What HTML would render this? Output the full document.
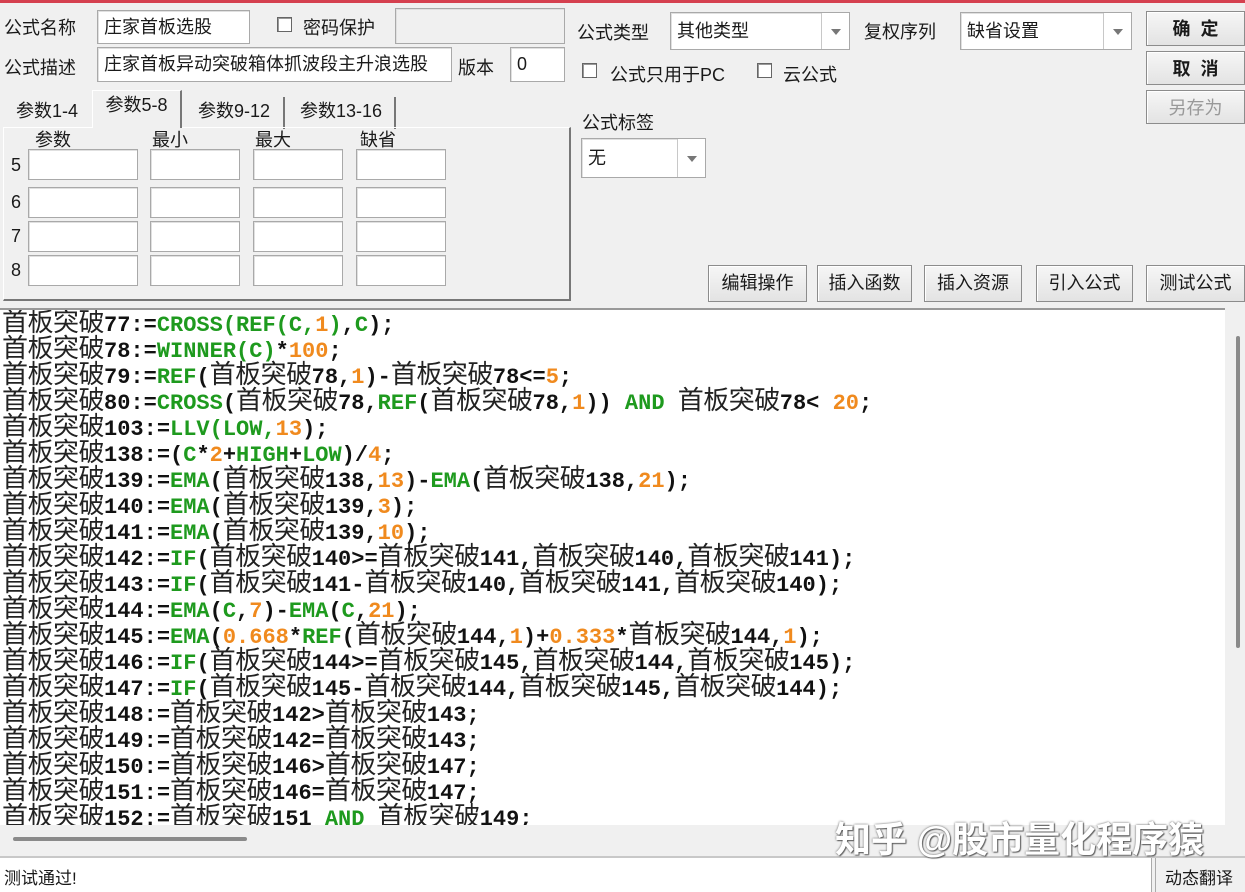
<!DOCTYPE html>
<html><head><meta charset="utf-8">
<style>
*{margin:0;padding:0;box-sizing:border-box}
body{width:1245px;height:892px;background:#f0f0f0;position:relative;overflow:hidden;font-family:"Liberation Sans","Noto Sans CJK SC",sans-serif;font-size:18px;color:#1a1a1a}
.a{position:absolute;white-space:nowrap}
.in{position:absolute;background:#fff;border:1px solid #a9a9a9;box-shadow:inset 1px 1px 0 #e0e0e0;padding-left:6px;line-height:32px;font-size:18px;white-space:nowrap;overflow:hidden}
.cb{position:absolute;width:15px;height:15px;background:#fff;border:1px solid #666;box-shadow:inset 1px 1px 0 #999}
.btn{position:absolute;background:linear-gradient(#f6f6f6,#e3e3e3);border:1px solid #8c8c8c;box-shadow:inset 1px 1px 0 #fff;text-align:center;font-size:18px;line-height:34px}
.arr{position:absolute;top:0;right:0;width:28px;height:100%;border-left:1px solid #c8c8c8;background:#fff}
.arr:after{content:"";position:absolute;left:9px;top:50%;margin-top:-2px;border-left:5px solid transparent;border-right:5px solid transparent;border-top:6px solid #777}
.tab{position:absolute;top:96px;height:32px;font-size:18px;line-height:28px;text-align:center;border-right:2px solid #777}
#code{position:absolute;left:0;top:308px;width:1225px;height:517px;background:#fff;overflow:hidden;border-top:2px solid #999}
pre{position:absolute;left:2px;top:3px;font-family:"Liberation Mono",monospace;font-weight:bold;font-size:22px;line-height:26px;color:#111}
.c{font-family:"Noto Sans CJK SC",sans-serif;font-weight:normal;font-size:26px;letter-spacing:-0.5px;color:#222;line-height:0}
.g{color:#1e9a1e}.o{color:#f08a1e}
</style></head><body>
<div class="a" style="left:0;top:0;width:1245px;height:3px;background:#d5404f"></div>

<div class="a" style="left:4px;top:14px">公式名称</div>
<div class="in" style="left:97px;top:10px;width:153px;height:34px">庄家首板选股</div>
<div class="cb" style="left:277px;top:17px"></div>
<div class="a" style="left:303px;top:14px">密码保护</div>
<div class="in" style="left:395px;top:8px;width:170px;height:36px;background:#f0f0f0"></div>

<div class="a" style="left:4px;top:54px">公式描述</div>
<div class="in" style="left:97px;top:47px;width:355px;height:35px">庄家首板异动突破箱体抓波段主升浪选股</div>
<div class="a" style="left:458px;top:54px">版本</div>
<div class="in" style="left:510px;top:47px;width:55px;height:35px">0</div>

<div class="tab" style="left:5px;width:84px;border-right:none;top:97px">参数1-4</div>
<div class="tab" style="left:92px;width:90px;top:90px;height:38px;background:#f0f0f0;border-left:1px solid #fff;border-top:1px solid #fff;z-index:2">参数5-8</div>
<div class="tab" style="left:185px;width:100px;top:97px">参数9-12</div>
<div class="tab" style="left:288px;width:108px;top:97px">参数13-16</div>
<div class="a" style="left:3px;top:127px;width:568px;height:174px;border:1px solid #fff;border-right:2px solid #777;border-bottom:2px solid #777"></div>
<div class="a" style="left:35px;top:126px">参数</div>
<div class="a" style="left:152px;top:126px">最小</div>
<div class="a" style="left:255px;top:126px">最大</div>
<div class="a" style="left:360px;top:126px">缺省</div>

<div class="a" style="left:11px;top:155px">5</div>
<div class="a" style="left:11px;top:192px">6</div>
<div class="a" style="left:11px;top:226px">7</div>
<div class="a" style="left:11px;top:260px">8</div>
<div class="in" style="left:28px;top:149px;width:110px;height:31px"></div><div class="in" style="left:150px;top:149px;width:90px;height:31px"></div><div class="in" style="left:253px;top:149px;width:90px;height:31px"></div><div class="in" style="left:356px;top:149px;width:90px;height:31px"></div>
<div class="in" style="left:28px;top:187px;width:110px;height:31px"></div><div class="in" style="left:150px;top:187px;width:90px;height:31px"></div><div class="in" style="left:253px;top:187px;width:90px;height:31px"></div><div class="in" style="left:356px;top:187px;width:90px;height:31px"></div>
<div class="in" style="left:28px;top:221px;width:110px;height:31px"></div><div class="in" style="left:150px;top:221px;width:90px;height:31px"></div><div class="in" style="left:253px;top:221px;width:90px;height:31px"></div><div class="in" style="left:356px;top:221px;width:90px;height:31px"></div>
<div class="in" style="left:28px;top:255px;width:110px;height:31px"></div><div class="in" style="left:150px;top:255px;width:90px;height:31px"></div><div class="in" style="left:253px;top:255px;width:90px;height:31px"></div><div class="in" style="left:356px;top:255px;width:90px;height:31px"></div>

<div class="a" style="left:577px;top:19px">公式类型</div>
<div class="in" style="left:670px;top:12px;width:180px;height:38px;line-height:36px">其他类型<div class="arr"></div></div>
<div class="a" style="left:864px;top:18px">复权序列</div>
<div class="in" style="left:960px;top:12px;width:172px;height:38px;line-height:36px">缺省设置<div class="arr"></div></div>
<div class="btn" style="left:1146px;top:11px;width:99px;height:35px;font-weight:bold">确&nbsp;&nbsp;定</div>
<div class="btn" style="left:1146px;top:51px;width:99px;height:34px;font-weight:bold">取&nbsp;&nbsp;消</div>
<div class="btn" style="left:1146px;top:90px;width:99px;height:34px;color:#999">另存为</div>

<div class="cb" style="left:582px;top:63px"></div>
<div class="a" style="left:610px;top:61px">公式只用于PC</div>
<div class="cb" style="left:757px;top:63px"></div>
<div class="a" style="left:783px;top:61px">云公式</div>
<div class="a" style="left:582px;top:109px">公式标签</div>
<div class="in" style="left:581px;top:138px;width:125px;height:40px;line-height:38px">无<div class="arr"></div></div>

<div class="btn" style="left:708px;top:265px;width:99px;height:37px">编辑操作</div>
<div class="btn" style="left:817px;top:265px;width:95px;height:37px">插入函数</div>
<div class="btn" style="left:924px;top:265px;width:98px;height:37px">插入资源</div>
<div class="btn" style="left:1036px;top:265px;width:97px;height:37px">引入公式</div>
<div class="btn" style="left:1146px;top:265px;width:99px;height:37px">测试公式</div>

<div id="code"><pre><span class="c">首板突破</span>77:=<span class="g">CROSS(REF(C,</span><span class="o">1</span><span class="g">)</span>,<span class="g">C</span>);
<span class="c">首板突破</span>78:=<span class="g">WINNER(C)</span>*<span class="o">100</span>;
<span class="c">首板突破</span>79:=<span class="g">REF</span>(<span class="c">首板突破</span>78,<span class="o">1</span>)-<span class="c">首板突破</span>78&lt;=<span class="o">5</span>;
<span class="c">首板突破</span>80:=<span class="g">CROSS</span>(<span class="c">首板突破</span>78,<span class="g">REF</span>(<span class="c">首板突破</span>78,<span class="o">1</span>)) <span class="g">AND</span> <span class="c">首板突破</span>78&lt; <span class="o">20</span>;
<span class="c">首板突破</span>103:=<span class="g">LLV(LOW,</span><span class="o">13</span>);
<span class="c">首板突破</span>138:=(<span class="g">C</span>*<span class="o">2</span>+<span class="g">HIGH</span>+<span class="g">LOW</span>)/<span class="o">4</span>;
<span class="c">首板突破</span>139:=<span class="g">EMA</span>(<span class="c">首板突破</span>138,<span class="o">13</span>)-<span class="g">EMA</span>(<span class="c">首板突破</span>138,<span class="o">21</span>);
<span class="c">首板突破</span>140:=<span class="g">EMA</span>(<span class="c">首板突破</span>139,<span class="o">3</span>);
<span class="c">首板突破</span>141:=<span class="g">EMA</span>(<span class="c">首板突破</span>139,<span class="o">10</span>);
<span class="c">首板突破</span>142:=<span class="g">IF</span>(<span class="c">首板突破</span>140&gt;=<span class="c">首板突破</span>141,<span class="c">首板突破</span>140,<span class="c">首板突破</span>141);
<span class="c">首板突破</span>143:=<span class="g">IF</span>(<span class="c">首板突破</span>141-<span class="c">首板突破</span>140,<span class="c">首板突破</span>141,<span class="c">首板突破</span>140);
<span class="c">首板突破</span>144:=<span class="g">EMA</span>(<span class="g">C</span>,<span class="o">7</span>)-<span class="g">EMA</span>(<span class="g">C</span>,<span class="o">21</span>);
<span class="c">首板突破</span>145:=<span class="g">EMA</span>(<span class="o">0.668</span>*<span class="g">REF</span>(<span class="c">首板突破</span>144,<span class="o">1</span>)+<span class="o">0.333</span>*<span class="c">首板突破</span>144,<span class="o">1</span>);
<span class="c">首板突破</span>146:=<span class="g">IF</span>(<span class="c">首板突破</span>144&gt;=<span class="c">首板突破</span>145,<span class="c">首板突破</span>144,<span class="c">首板突破</span>145);
<span class="c">首板突破</span>147:=<span class="g">IF</span>(<span class="c">首板突破</span>145-<span class="c">首板突破</span>144,<span class="c">首板突破</span>145,<span class="c">首板突破</span>144);
<span class="c">首板突破</span>148:=<span class="c">首板突破</span>142&gt;<span class="c">首板突破</span>143;
<span class="c">首板突破</span>149:=<span class="c">首板突破</span>142=<span class="c">首板突破</span>143;
<span class="c">首板突破</span>150:=<span class="c">首板突破</span>146&gt;<span class="c">首板突破</span>147;
<span class="c">首板突破</span>151:=<span class="c">首板突破</span>146=<span class="c">首板突破</span>147;
<span class="c">首板突破</span>152:=<span class="c">首板突破</span>151 <span class="g">AND</span> <span class="c">首板突破</span>149;</pre></div>
<div class="a" style="left:1225px;top:310px;width:20px;height:548px;background:#f0f0f0"></div>
<div class="a" style="left:1236px;top:336px;width:4px;height:312px;background:#8a8a8a;border-radius:2px"></div>
<div class="a" style="left:13px;top:837px;width:234px;height:4px;background:#8a8a8a;border-radius:2px"></div>
<div class="a" style="left:835px;top:818px;font-size:36px;line-height:44px;color:#fff;font-weight:bold;text-shadow:0 0 2px #555,1px 1px 1px #666;z-index:5">知乎 @股市量化程序猿</div>
<div class="a" style="left:0;top:856px;width:1245px;height:2px;background:#c8c8c8"></div>
<div class="a" style="left:0;top:858px;width:1152px;height:34px;background:#fff;border-right:1px solid #aaa"></div>
<div class="a" style="left:4px;top:864px;font-size:17px">测试通过!</div>
<div class="a" style="left:1155px;top:858px;width:90px;height:34px;background:#f0f0f0;border-left:1px solid #aaa"></div>
<div class="a" style="left:1165px;top:864px;font-size:17px">动态翻译</div>
</body></html>
